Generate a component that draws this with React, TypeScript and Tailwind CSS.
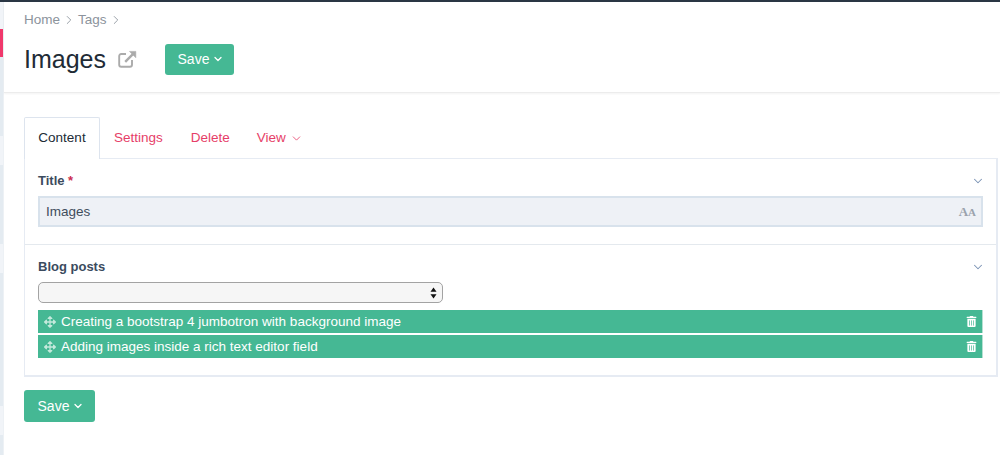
import React from 'react';
import { ChevronDown, ChevronRight } from 'lucide-react';
import { FaArrowsAlt, FaTrashAlt } from 'react-icons/fa';

const SaveButton = ({ className }: { className: string }) => (
    <button className={`flex items-center justify-center gap-[3px] rounded-[3px] bg-[#45b894] pl-[3px] text-[14px] text-white ${className}`}>
        Save
        <ChevronDown size={12} strokeWidth={2.6} />
    </button>
);

const LinkedItem = ({ title }: { title: string }) => (
    <div className="flex h-[23px] items-center border-r border-[#b5e0d1] bg-[#45b894] pl-[6px] pr-[5px] text-[13.5px] text-white">
        <FaArrowsAlt size={12} className="text-[#c4e9dc]" />
        <span className="ml-[5px] flex-1 pt-[2px]">{title}</span>
        <FaTrashAlt size={11} />
    </div>
);

const sidebarBands = [
    { height: 27, color: 'bg-[#f1f4f8]' },
    { height: 28, color: 'bg-[#f0386b]' },
    { height: 79, color: 'bg-[#e4ebf1]' },
    { height: 29, color: 'bg-[#f1f4f8]' },
    { height: 79, color: 'bg-[#e4ebf1]' },
    { height: 29, color: 'bg-[#f1f4f8]' },
    { height: 133, color: 'bg-[#e4ebf1]' },
    { height: 29, color: 'bg-[#f1f4f8]' },
    { height: 20, color: 'bg-[#e4ebf1]' },
];

export default function App() {
    return (
        <div className="flex h-[455px] w-[1000px] flex-col overflow-hidden bg-white font-['Liberation_Sans',Arial,sans-serif]">
            <div className="h-[2px] shrink-0 bg-[#2a3644]" />
            <div className="flex min-h-0 flex-1">
                {/* sidebar edge */}
                <div className="w-[4px] shrink-0 border-r border-[#edf1f5]">
                    {sidebarBands.map((band, i) => (
                        <div key={i} className={band.color} style={{ height: band.height }} />
                    ))}
                </div>

                <div className="min-w-0 flex-1">
                    <header className="h-[91px] border-b border-[#ececec] pl-[20px] shadow-[0_1px_2px_rgba(0,0,0,0.05)]">
                        <div className="flex items-center pt-[10px] text-[13.5px] leading-[16px] text-[#8c939c]">
                            <span>Home</span>
                            <ChevronRight size={14} strokeWidth={1.5} className="ml-[1.5px] mr-[2.5px]" />
                            <span>Tags</span>
                            <ChevronRight size={14} strokeWidth={1.5} className="ml-[2px]" />
                        </div>
                        <div className="mt-[15px] flex items-center">
                            <h1 className="text-[25px] leading-[32px] text-[#212b36]">Images</h1>
                            <svg width="19" height="18" viewBox="0 0 19 18" fill="none" stroke="#ababab" className="ml-[12px]">
                                <path d="M8 4H3.2C2 4 1.2 4.8 1.2 6v8.8c0 1.2.8 2 2 2H12c1.2 0 2-.8 2-2V10" strokeWidth="1.9" />
                                <path d="M7.2 11.8 16.4 2.6" strokeWidth="2.4" />
                                <path d="M11.5 1.4h6.3v6.3z" fill="#ababab" strokeWidth="0.6" />
                            </svg>
                            <SaveButton className="ml-[28px] h-[31px] w-[69px]" />
                        </div>
                    </header>

                    <div className="pl-[20px] pr-[2px] pt-[24px]">
                        <nav className="flex h-[42px] items-stretch text-[13.5px]">
                            <div className="relative z-10 flex h-[42px] w-[76px] items-center justify-center rounded-t-[2px] border border-b-0 border-[#dde4ee] bg-white text-[#212b36]">
                                Content
                            </div>
                            <div className="ml-[14px] flex items-center text-[#e63e68]">Settings</div>
                            <div className="ml-[28px] flex items-center text-[#e63e68]">Delete</div>
                            <div className="ml-[27px] flex items-center text-[#e63e68]">
                                View
                                <ChevronDown size={13} strokeWidth={1.5} className="ml-[4px]" />
                            </div>
                        </nav>

                        <section className="mt-[-1px] border border-b-2 border-r-2 border-[#e6ebf3]">
                            <div className="border-b border-[#e4e9ee] px-[13px] pb-[17px] pt-[14px]">
                                <div className="flex h-[16px] items-center justify-between">
                                    <label className="text-[13px] font-bold text-[#3b4b5e]">
                                        Title <span className="text-[#cb2d4f]">*</span>
                                    </label>
                                    <ChevronDown size={14} strokeWidth={1.8} className="mr-[-2px] text-[#7b93b5]" />
                                </div>
                                <div className="mt-[7px] flex h-[31px] items-center justify-between border-2 border-[#d8e2ec] bg-[#eef1f6] pl-[6px] pr-[5px] text-[13.5px] text-[#3f4d5c]">
                                    <span className="pt-[2px]">Images</span>
                                    <span className="font-['Liberation_Serif',serif] text-[13px] font-bold leading-none text-[#9aa2ac]">
                                        A<span className="text-[11px]">A</span>
                                    </span>
                                </div>
                            </div>

                            <div className="px-[13px] pb-[17px] pt-[14px]">
                                <div className="flex h-[16px] items-center justify-between">
                                    <label className="text-[13px] font-bold text-[#3b4b5e]">Blog posts</label>
                                    <ChevronDown size={14} strokeWidth={1.8} className="mr-[-2px] text-[#7b93b5]" />
                                </div>
                                <div className="mt-[7px] flex h-[21px] w-[405px] items-center justify-end rounded-[5px] border border-[#a3a3a3] bg-[#f6f6f6] pr-[5px]">
                                    <svg width="7" height="12" viewBox="0 0 7 12" fill="#111">
                                        <path d="M3.5 0.5 L6.5 4.8 H0.5 Z" />
                                        <path d="M3.5 11.5 L6.5 7.2 H0.5 Z" />
                                    </svg>
                                </div>
                                <div className="mt-[7px] flex flex-col gap-[2px]">
                                    <LinkedItem title="Creating a bootstrap 4 jumbotron with background image" />
                                    <LinkedItem title="Adding images inside a rich text editor field" />
                                </div>
                            </div>
                        </section>

                        <SaveButton className="mt-[13px] h-[32px] w-[71px]" />
                    </div>
                </div>
            </div>
        </div>
    );
}
